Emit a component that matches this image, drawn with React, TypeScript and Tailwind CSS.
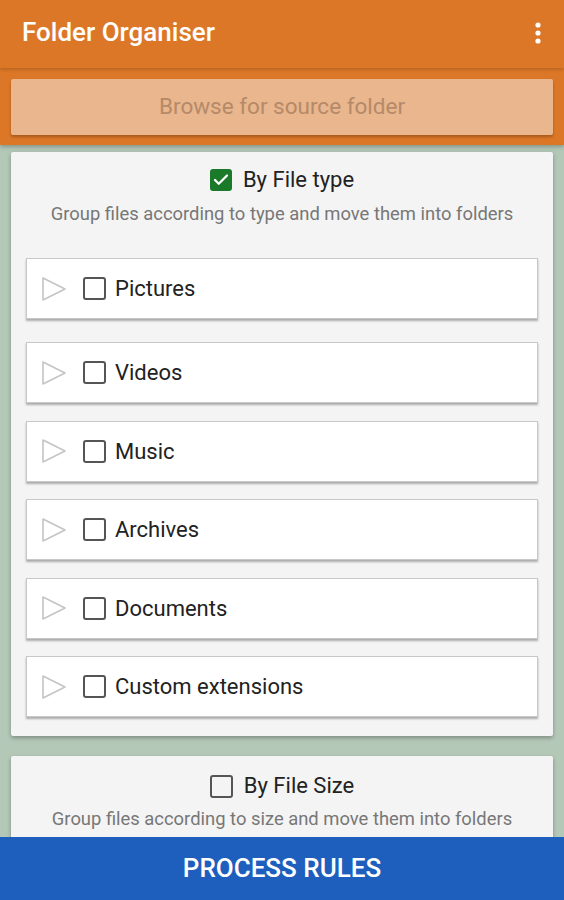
import { Check } from "lucide-react";

const items = ["Pictures", "Videos", "Music", "Archives", "Documents", "Custom extensions"];

function Box({ checked }: { checked?: boolean }) {
  if (checked)
    return (
      <span className="block w-[22px] h-[22px] rounded-[3px] bg-[#1b7a2a] flex items-center justify-center shrink-0">
        <Check size={18} strokeWidth={3} className="text-white" />
      </span>
    );
  return <span className="block w-[23px] h-[23px] rounded-[3px] border-2 border-[#555] shrink-0" />;
}

function Row({ label }: { label: string }) {
  return (
    <div className="h-[61px] bg-white border border-[#c8c8c8] shadow-[0_2px_2px_rgba(0,0,0,0.3)] flex items-center pl-[14px]">
      <svg width="27" height="26" viewBox="0 0 27 26" className="shrink-0">
        <path d="M2 2 L24 13 L2 24 Z" fill="none" stroke="#c4c4c4" strokeWidth="1.6" strokeLinejoin="round" />
      </svg>
      <span className="ml-[15px]">
        <Box />
      </span>
      <span className="ml-[9px] text-[22px] text-[#222]">{label}</span>
    </div>
  );
}

export default function App() {
  return (
    <div className="w-[564px] h-[900px] bg-[#b4c8b8] flex flex-col overflow-hidden" style={{ fontFamily: "Roboto, 'Liberation Sans', sans-serif" }}>
      <div className="bg-[#dc7727] shadow-[0_2px_4px_rgba(0,0,0,0.25)] z-10">
        <div className="h-[68px] flex items-center justify-between pl-[22px] pr-[22px] pb-[3px] shadow-[0_2px_3px_rgba(0,0,0,0.15)]">
          <span className="text-white text-[26px] font-medium">Folder Organiser</span>
          <svg width="8" height="24" viewBox="0 0 8 24">
            <circle cx="4" cy="4" r="2.6" fill="#fff" />
            <circle cx="4" cy="12" r="2.6" fill="#fff" />
            <circle cx="4" cy="20" r="2.6" fill="#fff" />
          </svg>
        </div>
        <div className="px-[11px] pt-[11px] pb-[10px]">
          <div className="h-[56px] bg-[#e9b68e] rounded-[2px] shadow-[0_2px_3px_rgba(0,0,0,0.25)] flex items-center justify-center text-[22.5px] text-[#b58a68]">
            Browse for source folder
          </div>
        </div>
      </div>

      <div className="px-[11px] pt-[7px] flex flex-col gap-[20px]">
        <div className="bg-[#f4f4f4] rounded-[2px] shadow-[0_2px_4px_rgba(0,0,0,0.3)] pt-[14px] pb-[19px] px-[15px]">
          <div className="h-[28px] flex items-center justify-center gap-[11px]">
            <Box checked />
            <span className="text-[22px] leading-[28px] text-[#222]">By File type</span>
          </div>
          <div className="text-center text-[18.4px] leading-[28px] text-[#777] mt-[6px]">
            Group files according to type and move them into folders
          </div>
          <div className="mt-[30px] flex flex-col gap-[17.5px]">
            {items.map((l, i) => (
              <div key={l} className={i === 1 ? "mt-[5.5px]" : ""}>
                <Row label={l} />
              </div>
            ))}
          </div>
        </div>

        <div className="bg-[#f4f4f4] rounded-[2px] shadow-[0_2px_4px_rgba(0,0,0,0.3)] pt-[16px] pb-[30px] px-[15px]">
          <div className="h-[28px] flex items-center justify-center gap-[11px]">
            <Box />
            <span className="text-[22px] leading-[28px] text-[#222]">By File Size</span>
          </div>
          <div className="text-center text-[18.4px] leading-[28px] text-[#777] mt-[5px]">
            Group files according to size and move them into folders
          </div>
        </div>
      </div>

      <div className="fixed left-0 top-[837px] w-[564px] h-[63px] bg-[#1e5fbe] flex items-center justify-center text-white text-[26px] font-medium">
        PROCESS RULES
      </div>
    </div>
  );
}
